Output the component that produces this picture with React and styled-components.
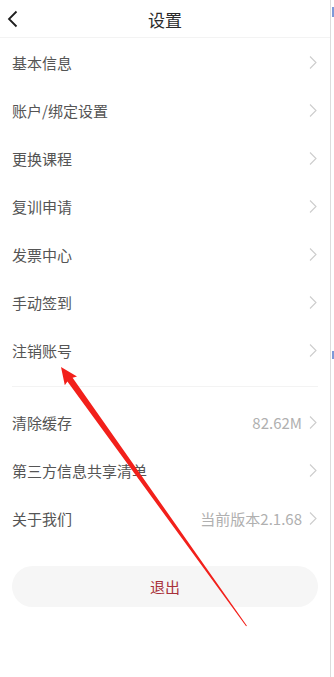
import React from "react";
import styled, { createGlobalStyle } from "styled-components";

const Global = createGlobalStyle`
  html, body { margin: 0; padding: 0; background: #fff; }
  body { font-family: "Noto Sans CJK SC", "Noto Sans", sans-serif; }
`;

const Page = styled.div`
  position: relative;
  display: flex;
  width: 334px;
  height: 677px;
  overflow: hidden;
  background: #fff;
`;

const Main = styled.div`
  width: 330px;
  display: flex;
  flex-direction: column;
`;

const Side = styled.div`
  flex: 1;
  border-left: 1px solid #dcdcdc;
  display: flex;
  flex-direction: column;
  padding-top: 7px;
`;

const SideMark = styled.div`
  height: ${(p) => p.h}px;
  margin-top: ${(p) => p.mt}px;
  margin-left: 1px;
  background: ${(p) => p.c};
`;

const Header = styled.div`
  height: 38px;
  display: flex;
  align-items: center;
  justify-content: center;
  position: relative;
  border-bottom: 1px solid #f3f3f3;
  box-sizing: border-box;
`;

const Back = styled.svg`
  position: absolute;
  left: 7px;
  top: 10px;
`;

const Title = styled.div`
  font-size: 17px;
  color: #2a2a2a;
  line-height: 1;
  padding-top: 1px;
`;

const List = styled.div`
  display: flex;
  flex-direction: column;
  padding: 0 12px;
`;

const Row = styled.div`
  height: 48px;
  display: flex;
  align-items: center;
  justify-content: space-between;
`;

const Label = styled.span`
  font-size: 15px;
  color: #555;
`;

const Right = styled.div`
  display: flex;
  align-items: center;
  gap: 6px;
`;

const Value = styled.span`
  font-size: 15px;
  color: #b0b0b0;
`;

const Divider = styled.div`
  height: 1px;
  background: #f3f3f3;
  margin: 12px 0 11px;
`;

const LogoutWrap = styled.div`
  padding: 0 12px;
  margin-top: 24px;
`;

const Logout = styled.button`
  width: 100%;
  height: 41px;
  border: none;
  border-radius: 21px;
  background: #f6f6f6;
  color: #a8303a;
  font-family: inherit;
  font-size: 15px;
  display: flex;
  align-items: center;
  justify-content: center;
  padding: 0;
`;

const Overlay = styled.svg`
  position: absolute;
  left: 0;
  top: 0;
  pointer-events: none;
`;

const Chevron = () => (
  <svg width="10" height="15" viewBox="0 0 10 15">
    <path d="M2 1.5 L8 7.5 L2 13.5" fill="none" stroke="#cdcdcd" strokeWidth="1.1" />
  </svg>
);

const rowsA = ["基本信息", "账户/绑定设置", "更换课程", "复训申请", "发票中心", "手动签到", "注销账号"];
const rowsB = [
  { label: "清除缓存", value: "82.62M" },
  { label: "第三方信息共享清单" },
  { label: "关于我们", value: "当前版本2.1.68" },
];

const Item = ({ label, value }) => (
  <Row>
    <Label>{label}</Label>
    <Right>
      {value && <Value>{value}</Value>}
      <Chevron />
    </Right>
  </Row>
);

export default function App() {
  const tip = [61, 367];
  const tail = [246.5, 626];
  const dx = tail[0] - tip[0];
  const dy = tail[1] - tip[1];
  const len = Math.hypot(dx, dy);
  const ux = dx / len, uy = dy / len;
  const px = uy, py = -ux;
  const headLen = 17, headHalf = 7.5, shaftHalf = 3.2, tailHalf = 0.5;
  const bx = tip[0] + ux * headLen, by = tip[1] + uy * headLen;
  const pts = [
    [tip[0], tip[1]],
    [bx + px * headHalf, by + py * headHalf],
    [bx + px * shaftHalf - ux * 1.5, by + py * shaftHalf - uy * 1.5],
    [tail[0] + px * tailHalf, tail[1] + py * tailHalf],
    [tail[0] - px * tailHalf, tail[1] - py * tailHalf],
    [bx - px * shaftHalf - ux * 1.5, by - py * shaftHalf - uy * 1.5],
    [bx - px * headHalf, by - py * headHalf],
  ]
    .map((p) => p.map((v) => v.toFixed(1)).join(","))
    .join(" ");

  return (
    <>
      <Global />
      <Page>
        <Main>
          <Header>
            <Back width="12" height="18" viewBox="0 0 12 18">
              <path d="M9.5 1.5 L2 9 L9.5 16.5" fill="none" stroke="#1e1e1e" strokeWidth="1.8" />
            </Back>
            <Title>设置</Title>
          </Header>
          <List>
            {rowsA.map((l) => (
              <Item key={l} label={l} />
            ))}
            <Divider />
            {rowsB.map((r) => (
              <Item key={r.label} label={r.label} value={r.value} />
            ))}
          </List>
          <LogoutWrap>
            <Logout>退出</Logout>
          </LogoutWrap>
        </Main>
        <Side>
          <SideMark h={10} mt={0} c="#7d9ad8" />
          <SideMark h={8} mt={334} c="#7d9ad8" />
        </Side>
        <Overlay width="334" height="677" viewBox="0 0 334 677">
          <polygon points={pts} fill="#f2201b" />
        </Overlay>
      </Page>
    </>
  );
}
